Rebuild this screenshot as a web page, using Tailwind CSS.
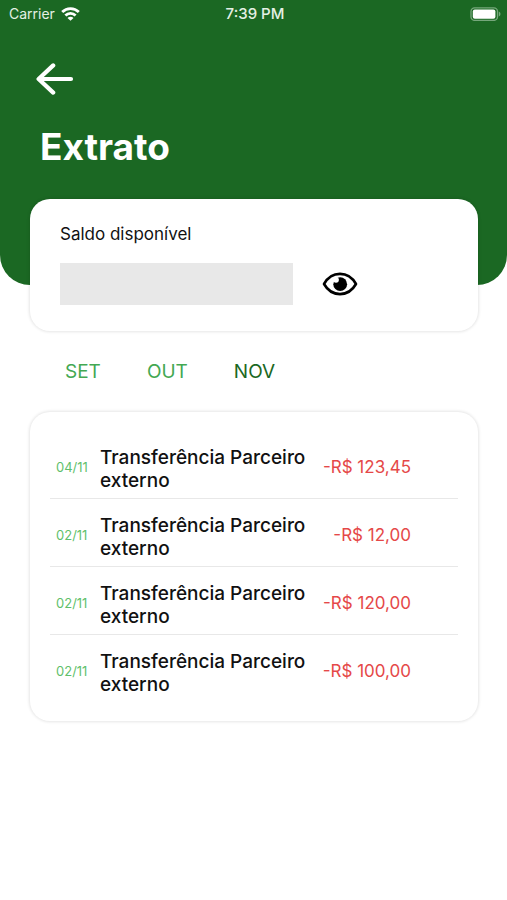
<!DOCTYPE html>
<html lang="pt-BR">
<head>
    <meta charset="UTF-8">
    <meta name="viewport" content="width=device-width, initial-scale=1.0">
    <title>Extrato</title>
    <script src="https://cdn.jsdelivr.net/npm/@tailwindcss/browser@4"></script>
</head>
<body class="bg-white min-h-screen font-['Inter','Liberation_Sans',sans-serif] text-[#111]">

    <header class="bg-[#1b6823] text-white rounded-b-[30px] pb-[115px]">
        <!-- Status bar -->
        <div class="grid grid-cols-3 items-center h-7 pl-[9px] pr-[6px] text-sm leading-5 text-[#e4f0e4]">
            <div class="flex items-center gap-[6px]">
                <span>Carrier</span>
                <svg class="w-[19px] h-[14px]" viewBox="0 0 19 14" fill="none" stroke="#fff" stroke-width="2.8" aria-hidden="true">
                    <path d="M1.2 5a11.8 11.8 0 0 1 16.6 0"/>
                    <path d="M4.4 8.5a7.2 7.2 0 0 1 10.2 0"/>
                    <path d="M9.5 13.8L6.5 11a4.2 4.2 0 0 1 6 0z" fill="#fff" stroke="none"/>
                </svg>
            </div>
            <span class="text-center text-[15px] font-medium">7:39 PM</span>
            <svg class="justify-self-end w-[31px] h-[14px]" viewBox="0 0 31 14" aria-hidden="true">
                <rect x="1" y=".8" width="26.5" height="12.6" rx="3.6" fill="none" stroke="#76a77b" stroke-width="1.3"/>
                <rect x="2.8" y="2.5" width="22.6" height="9.2" rx="2" fill="#fff"/>
                <path d="M28.8 4.6c2.2.8 2.2 4.2 0 5z" fill="#76a77b"/>
            </svg>
        </div>

        <div class="pt-[34px] px-9">
            <button type="button" aria-label="Voltar" class="block">
                <svg class="w-[38px] h-[34px]" viewBox="0 0 38 34" fill="none" stroke="#fff" stroke-width="4.2" stroke-linecap="round" stroke-linejoin="round">
                    <path d="M17.2 3.4L2.6 17l14.6 13.6M3 17h32"/>
                </svg>
            </button>
            <h1 class="mt-[27px] pl-1 text-[37px] leading-[47px] font-bold">Extrato</h1>
        </div>
    </header>

    <main class="pl-[30px] pr-[29px] -mt-[86px]">
        <!-- Balance -->
        <section class="bg-white rounded-[20px] shadow-[0_0_3px_1px_rgba(0,0,0,0.1)] pt-6 px-[30px] pb-[26px]">
            <h2 class="text-[17px] leading-[22px]">Saldo disponível</h2>
            <div class="flex items-center gap-[29px] mt-[18px]">
                <div class="w-3/5 h-[42px] bg-[#e8e8e8]"></div>
                <button type="button" aria-label="Mostrar saldo" class="shrink-0">
                    <svg class="w-[36px] h-6" viewBox="0 0 36 24">
                        <path d="M2 12C6 5 11.6 1.9 18 1.9S30 5 34 12c-4 7-9.6 10.1-16 10.1S6 19 2 12z" fill="none" stroke="#000" stroke-width="2.6" stroke-linejoin="round"/>
                        <circle cx="18.2" cy="12.2" r="6.9"/>
                        <circle cx="14" cy="7.8" r="2.9" fill="#fff"/>
                    </svg>
                </button>
            </div>
        </section>

        <!-- Months -->
        <nav class="flex gap-[46px] mt-7 pl-[35px] text-[19px] leading-[25px] text-[#43a852]">
            <a href="#set">SET</a>
            <a href="#out">OUT</a>
            <a href="#nov" aria-current="page" class="text-[#1b6823]">NOV</a>
        </nav>

        <!-- Transactions -->
        <section class="mt-7 rounded-[20px] shadow-[0_0_3px_1px_rgba(0,0,0,0.1)] px-5 pt-[19px] pb-[19px]">
            <table class="w-full">
                <tbody>
                    <tr class="border-b border-[#e8e8e8]">
                        <td class="w-[50px] pl-[6px] pt-[6px] text-[13px] text-[#5fbf6c]">04/11</td>
                        <td class="pt-[15px] pb-[6px] text-[19px] leading-[23px] font-medium">Transferência Parceiro externo</td>
                        <td class="w-px pr-[47px] pt-[6px] text-[17px] text-right whitespace-nowrap text-[#e54848]">-R$ 123,45</td>
                    </tr>
                    <tr class="border-b border-[#e8e8e8]">
                        <td class="w-[50px] pl-[6px] pt-[6px] text-[13px] text-[#5fbf6c]">02/11</td>
                        <td class="pt-[15px] pb-[6px] text-[19px] leading-[23px] font-medium">Transferência Parceiro externo</td>
                        <td class="w-px pr-[47px] pt-[6px] text-[17px] text-right whitespace-nowrap text-[#e54848]">-R$ 12,00</td>
                    </tr>
                    <tr class="border-b border-[#e8e8e8]">
                        <td class="w-[50px] pl-[6px] pt-[6px] text-[13px] text-[#5fbf6c]">02/11</td>
                        <td class="pt-[15px] pb-[6px] text-[19px] leading-[23px] font-medium">Transferência Parceiro externo</td>
                        <td class="w-px pr-[47px] pt-[6px] text-[17px] text-right whitespace-nowrap text-[#e54848]">-R$ 120,00</td>
                    </tr>
                    <tr>
                        <td class="w-[50px] pl-[6px] pt-[6px] text-[13px] text-[#5fbf6c]">02/11</td>
                        <td class="pt-[15px] pb-[6px] text-[19px] leading-[23px] font-medium">Transferência Parceiro externo</td>
                        <td class="w-px pr-[47px] pt-[6px] text-[17px] text-right whitespace-nowrap text-[#e54848]">-R$ 100,00</td>
                    </tr>
                </tbody>
            </table>
        </section>
    </main>

</body>
</html>
